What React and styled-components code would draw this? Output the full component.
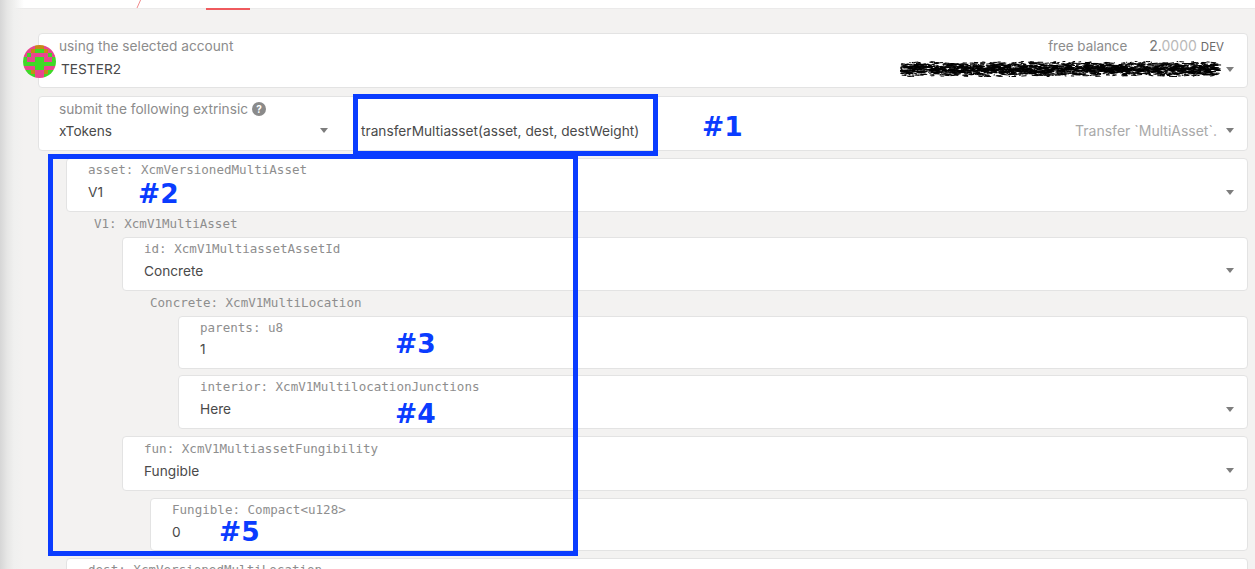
import React from "react";
import styled, { createGlobalStyle } from "styled-components";

const GlobalStyle = createGlobalStyle`
  html, body {
    margin: 0;
    height: 569px;
    overflow: hidden;
    background: #f3f2f1;
    font-family: "Inter", "Liberation Sans", sans-serif;
  }
`;

const Page = styled.div`
  position: relative;
  width: 1255px;
  height: 569px;
  overflow: hidden;
`;

const SideShade = styled.div`
  position: absolute;
  left: 0;
  top: 0;
  bottom: 0;
  width: 24px;
  background: linear-gradient(to right, #d6d6d6 0, #e6e6e5 7px, #f0f0ef 14px, rgba(243, 242, 241, 0) 100%);
  pointer-events: none;
`;

const TopBar = styled.div`
  display: flex;
  align-items: flex-end;
  height: 8px;
  padding-left: 136px;
  background: #fff;
  border-bottom: 1px solid #ebeaea;
`;

const Slash = styled.svg`
  width: 6px;
  height: 9px;
  flex: none;
`;

const ActiveTab = styled.div`
  width: 44px;
  height: 2px;
  margin-left: 64px;
  margin-bottom: -2px;
  background: #ef5a5e;
`;

const Main = styled.div`
  display: flex;
  flex-direction: column;
  gap: 8px;
  padding: 24px 7px 0 38px;
`;

const Card = styled.div`
  position: relative;
  display: flex;
  align-items: stretch;
  box-sizing: border-box;
  height: ${(p) => p.$h || 54}px;
  margin-top: ${(p) => p.$mt || 0}px;
  background: #fff;
  border: 1px solid #e3e3e3;
  border-radius: 4px;
  flex: none;
`;

const Field = styled.div`
  flex: 1;
  min-width: 0;
  padding: ${(p) => p.$top || 0}px 0 0 ${(p) => p.$left || 21}px;
`;

const Label = styled.div`
  font-size: 13.7px;
  line-height: 18px;
  color: #8c8c8c;
  display: flex;
  align-items: center;
  gap: 4px;
`;

const Value = styled.div`
  font-size: 13.7px;
  line-height: 18px;
  margin-top: ${(p) => p.$mt ?? 5}px;
  margin-left: ${(p) => p.$shift || 0}px;
  color: #4a4a4a;
`;

const TypeLabel = styled.div`
  font-family: "DejaVu Sans Mono", monospace;
  font-size: 12.55px;
  line-height: 16px;
  color: #8e8e8e;
  white-space: pre;
`;

const GroupLabel = styled(TypeLabel)`
  height: 25px;
  padding: 4px 0 0 ${(p) => p.$left || 0}px;
  box-sizing: border-box;
`;

const Params = styled.div`
  display: flex;
  flex-direction: column;
  margin-left: 28px;
`;

const Nested = styled.div`
  display: flex;
  flex-direction: column;
  margin-left: ${(p) => p.$left ?? 28}px;
`;

const Caret = styled.i`
  position: absolute;
  right: ${(p) => p.$right || 13}px;
  top: ${(p) => p.$top || 31}px;
  width: 0;
  height: 0;
  border-left: 4.5px solid transparent;
  border-right: 4.5px solid transparent;
  border-top: 5px solid #7d7d7d;
`;

const Avatar = styled.svg`
  position: absolute;
  left: -16px;
  top: 11px;
  width: 33px;
  height: 33px;
  border-radius: 50%;
`;

const BalanceRow = styled.div`
  position: absolute;
  right: 23px;
  top: 3px;
  display: flex;
  align-items: baseline;
  font-size: 13.4px;
  line-height: 18px;
  color: #8c8c8c;
`;

const BalanceValue = styled.span`
  margin-left: 22px;
  font-size: 14px;
  color: #777;
`;

const BalanceFraction = styled.span`
  color: #b9b9b9;
`;

const BalanceUnit = styled.span`
  margin-left: 4px;
  font-size: 11.5px;
  color: #6a6a6a;
`;

const Scribble = styled.svg`
  position: absolute;
  right: 25px;
  top: 27px;
  width: 322px;
  height: 16px;
`;

const HelpDot = styled.span`
  display: inline-flex;
  align-items: center;
  justify-content: center;
  width: 14px;
  height: 14px;
  border-radius: 50%;
  background: #8a8a8a;
  color: #fff;
  font-size: 10px;
  font-weight: 700;
`;

const ModuleSide = styled.div`
  position: relative;
  width: 311px;
  flex: none;
`;

const MethodSide = styled.div`
  flex: 1;
  display: flex;
  justify-content: space-between;
  padding: 25px 30px 0 11px;
  font-size: 13.7px;
  line-height: 18px;
  color: #4a4a4a;
`;

const MethodHint = styled.span`
  color: #a9a9a9;
  font-size: 14px;
`;

// blue marks drawn over the screenshot by whoever wrote the docs
const Frame = styled.div`
  position: absolute;
  box-sizing: border-box;
  left: ${(p) => p.$x}px;
  top: ${(p) => p.$y}px;
  width: ${(p) => p.$w}px;
  height: ${(p) => p.$h}px;
  border: ${(p) => p.$b}px solid #0a3cff;
  pointer-events: none;
`;

const Mark = styled.div`
  position: absolute;
  left: ${(p) => p.$x}px;
  top: ${(p) => p.$y}px;
  font-family: "DejaVu Sans", sans-serif;
  font-weight: 700;
  font-size: 26.5px;
  line-height: 30px;
  color: #0a3cff;
`;

// 8x8 identicon, p pink, g green, o orange
const IDENTICON = [
  "pppooppp",
  "ppoggopp",
  "pgppppgp",
  "gppggppg",
  "gggggggg",
  "pppggppp",
  "ggoppogg",
  "gggppggg",
];
const CELL = { p: "#e8468f", g: "#3fd827", o: "#c48a17" };

const scribblePath = (() => {
  let seed = 7;
  const rnd = () => {
    seed = (seed * 16807) % 2147483647;
    return seed / 2147483647;
  };
  let d = "";
  for (let i = 0; i < 2400; i += 1) {
    const x = rnd() * 316;
    const y = 8 + (rnd() + rnd() - 1) * 8;
    const len = 1 + rnd() * 5;
    d += `M${x.toFixed(1)} ${y.toFixed(1)}l${len.toFixed(1)} ${(rnd() - 0.5).toFixed(1)}`;
  }
  return d;
})();

const App = () => {
  return (
    <Page>
      <GlobalStyle />
      <TopBar>
        <Slash viewBox="0 0 6 9">
          <path d="M1 9 L5 0" stroke="#f08a8c" strokeWidth="1" fill="none" />
        </Slash>
        <ActiveTab />
      </TopBar>
      <Main>
        <Card $h={55}>
          <Avatar viewBox="0 0 8 8" shapeRendering="crispEdges">
            {IDENTICON.map((row, y) =>
              row.split("").map((c, x) => (
                <rect key={`${x}-${y}`} x={x} y={y} width="1" height="1" fill={CELL[c]} />
              ))
            )}
          </Avatar>
          <Field $left={20} $top={3}>
            <Label>using the selected account</Label>
            <Value $shift={2}>TESTER2</Value>
          </Field>
          <BalanceRow>
            free balance
            <BalanceValue>
              2.<BalanceFraction>0000</BalanceFraction>
            </BalanceValue>
            <BalanceUnit>DEV</BalanceUnit>
          </BalanceRow>
          <Scribble viewBox="0 0 322 16">
            <path d={scribblePath} stroke="#000" strokeWidth="1" fill="none" />
          </Scribble>
          <Caret $top={33} />
        </Card>
        <Card $h={55}>
          <ModuleSide>
            <Field $left={20} $top={3}>
              <Label>
                submit the following extrinsic
                <HelpDot>?</HelpDot>
              </Label>
              <Value $mt={4}>xTokens</Value>
            </Field>
            <Caret $right={22} $top={31} />
          </ModuleSide>
          <MethodSide>
            transferMultiasset(asset, dest, destWeight)
            <MethodHint>Transfer `MultiAsset`.</MethodHint>
          </MethodSide>
          <Caret $top={31} />
        </Card>
        <Params>
          <Card $mt={-1}>
            <Field $top={3}>
              <TypeLabel>asset: XcmVersionedMultiAsset</TypeLabel>
              <Value>V1</Value>
            </Field>
            <Caret $top={31} />
          </Card>
          <Nested $left={0}>
            <GroupLabel $left={28}>V1: XcmV1MultiAsset</GroupLabel>
            <Nested $left={56}>
              <Card>
                <Field $top={3}>
                  <TypeLabel>id: XcmV1MultiassetAssetId</TypeLabel>
                  <Value>Concrete</Value>
                </Field>
                <Caret $top={30} />
              </Card>
              <Nested $left={0}>
                <GroupLabel $left={28}>Concrete: XcmV1MultiLocation</GroupLabel>
                <Nested $left={56}>
                  <Card $h={53}>
                    <Field $top={3}>
                      <TypeLabel>parents: u8</TypeLabel>
                      <Value $mt={4}>1</Value>
                    </Field>
                  </Card>
                  <Card $h={54} $mt={6}>
                    <Field $top={3}>
                      <TypeLabel>interior: XcmV1MultilocationJunctions</TypeLabel>
                      <Value>Here</Value>
                    </Field>
                    <Caret $top={31} />
                  </Card>
                </Nested>
              </Nested>
              <Card $h={55} $mt={7}>
                <Field $top={4}>
                  <TypeLabel>fun: XcmV1MultiassetFungibility</TypeLabel>
                  <Value>Fungible</Value>
                </Field>
                <Caret $top={31} />
              </Card>
              <Nested>
                <Card $h={53} $mt={7}>
                  <Field $top={3}>
                    <TypeLabel>Fungible: Compact&lt;u128&gt;</TypeLabel>
                    <Value>0</Value>
                  </Field>
                </Card>
              </Nested>
            </Nested>
          </Nested>
          <Card $mt={7}>
            <Field $top={3}>
              <TypeLabel>dest: XcmVersionedMultiLocation</TypeLabel>
            </Field>
          </Card>
        </Params>
      </Main>
      <SideShade />
      <Frame $x={353} $y={94} $w={305} $h={62} $b={5} />
      <Frame $x={48} $y={154} $w={530} $h={402} $b={5} />
      <Mark $x={702} $y={112}>#1</Mark>
      <Mark $x={138} $y={179}>#2</Mark>
      <Mark $x={395} $y={329}>#3</Mark>
      <Mark $x={395} $y={399}>#4</Mark>
      <Mark $x={219} $y={517}>#5</Mark>
    </Page>
  );
};

export default App;
